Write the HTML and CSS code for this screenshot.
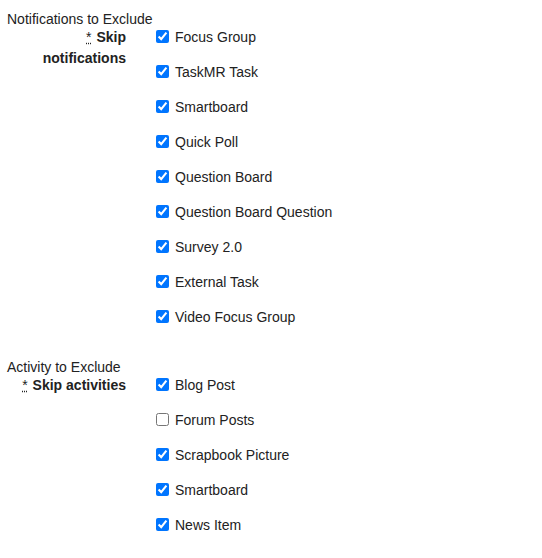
FILE: index.html
```html
<!DOCTYPE html>
<html>
<head>
<meta charset="utf-8">
<link rel="stylesheet" href="styles.css">
</head>
<body>
<div class="page">
  <section class="group">
    <div class="legend">Notifications to Exclude</div>
    <div class="field">
      <div class="label"><abbr title="required">*</abbr> <span class="label-text">Skip notifications</span></div>
      <ul class="options">
        <li><label><input type="checkbox" checked><span>Focus Group</span></label></li>
        <li><label><input type="checkbox" checked><span>TaskMR Task</span></label></li>
        <li><label><input type="checkbox" checked><span>Smartboard</span></label></li>
        <li><label><input type="checkbox" checked><span>Quick Poll</span></label></li>
        <li><label><input type="checkbox" checked><span>Question Board</span></label></li>
        <li><label><input type="checkbox" checked><span>Question Board Question</span></label></li>
        <li><label><input type="checkbox" checked><span>Survey 2.0</span></label></li>
        <li><label><input type="checkbox" checked><span>External Task</span></label></li>
        <li><label><input type="checkbox" checked><span>Video Focus Group</span></label></li>
      </ul>
    </div>
  </section>
  <section class="group second">
    <div class="legend">Activity to Exclude</div>
    <div class="field">
      <div class="label"><abbr title="required">*</abbr> <span class="label-text">Skip activities</span></div>
      <ul class="options">
        <li><label><input type="checkbox" checked><span>Blog Post</span></label></li>
        <li><label><input type="checkbox"><span>Forum Posts</span></label></li>
        <li><label><input type="checkbox" checked><span>Scrapbook Picture</span></label></li>
        <li><label><input type="checkbox" checked><span>Smartboard</span></label></li>
        <li><label><input type="checkbox" checked><span>News Item</span></label></li>
      </ul>
    </div>
  </section>
</div>
</body>
</html>
```
FILE: styles.css
```css
html, body {
  margin: 0;
  padding: 0;
  background: #fff;
}
body {
  font-family: "Liberation Sans", Arial, sans-serif;
  font-size: 14px;
  color: #222;
}
.page {
  padding: 11px 0 0 7px;
}
.legend {
  line-height: 16px;
}
.group.second {
  margin-top: 31px;
}
.field {
  display: flex;
  gap: 30px;
}
.label {
  width: 119px;
  text-align: right;
  line-height: 21px;
}
.label-text {
  font-weight: bold;
}
.label abbr {
  font-weight: normal;
  text-decoration: underline dotted;
  cursor: help;
  margin-right: 1px;
}
.options {
  list-style: none;
  margin: 0;
  padding: 0;
}
.options li {
  height: 21px;
  margin-bottom: 14px;
}
.options li:last-child {
  margin-bottom: 0;
}
.options label {
  display: flex;
  align-items: flex-start;
  height: 21px;
  line-height: 21px;
}
.options input {
  margin: 3px 6px 0 0;
  width: 13px;
  height: 13px;
}
```
